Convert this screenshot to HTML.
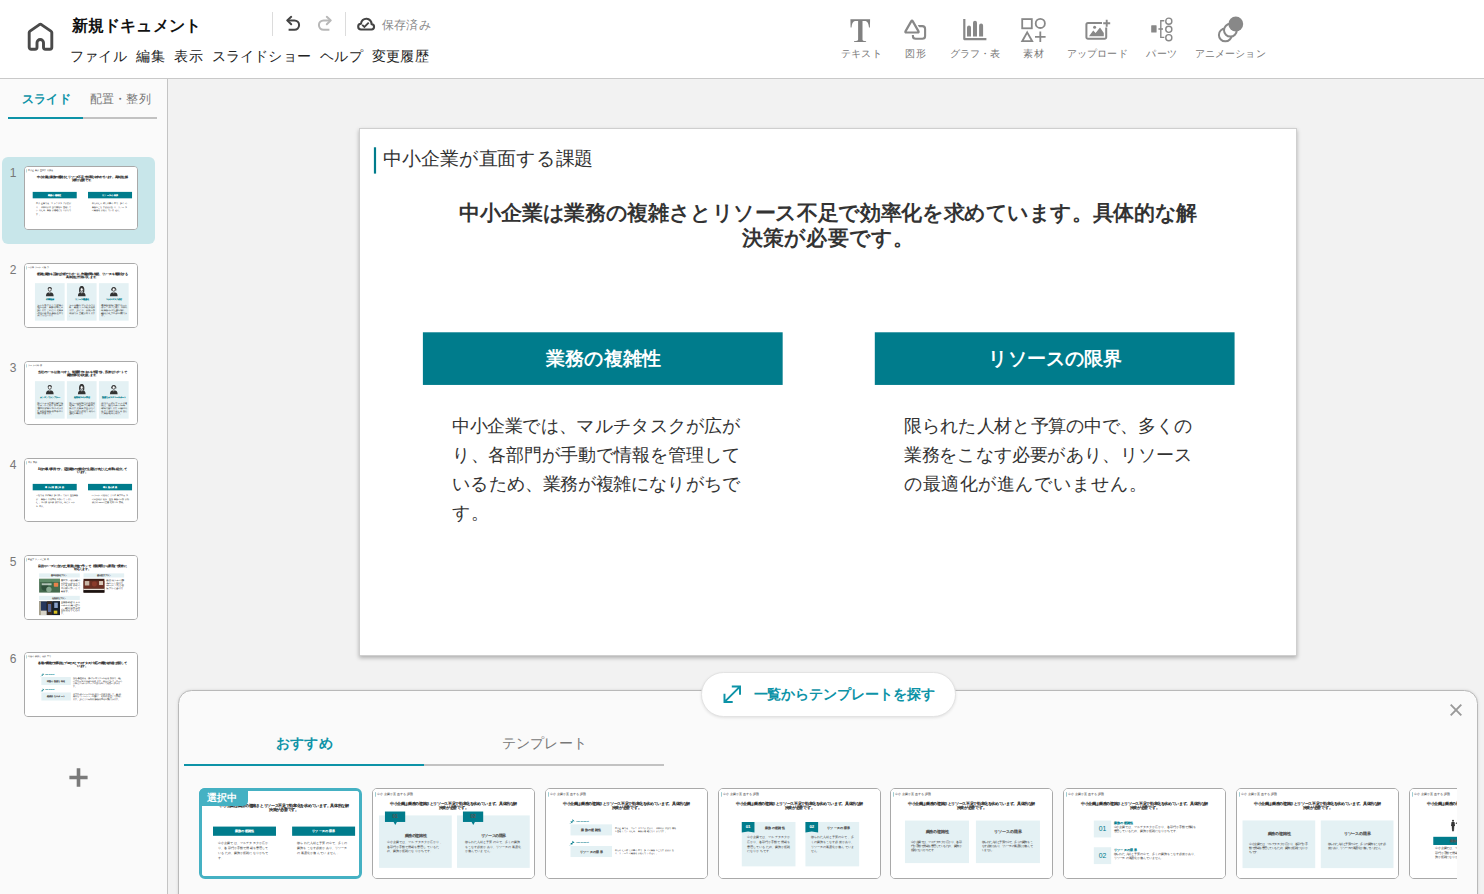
<!DOCTYPE html>
<html lang="ja">
<head>
<meta charset="utf-8">
<title>新規ドキュメント</title>
<style>
*{box-sizing:border-box;margin:0;padding:0}
html,body{width:1484px;height:894px;overflow:hidden}
body{font-family:"Liberation Sans",sans-serif;background:#f2f2f2;position:relative;color:#333;-webkit-font-smoothing:antialiased}
.abs{position:absolute}
svg{position:absolute;overflow:visible}
/* header */
#hd{position:absolute;left:0;top:0;width:1484px;height:79px;background:#fff;border-bottom:1px solid #c9c9c9}
#ttl{position:absolute;left:72px;top:15px;height:22px;line-height:22px;font-size:16px;font-weight:bold;color:#111;white-space:nowrap}
#menu{position:absolute;left:70px;top:46px;height:20px;line-height:20px;font-size:14px;color:#222;white-space:nowrap}
#menu span{display:inline-block;margin-right:10px;vertical-align:top}
.vd{position:absolute;top:12px;width:1px;height:24px;background:#dcdcdc}
#saved{position:absolute;left:382px;top:16px;height:18px;line-height:18px;font-size:12px;color:#8a8a8a;white-space:nowrap}
.tl{position:absolute;top:47px;height:14px;line-height:14px;font-size:10px;color:#777;white-space:nowrap;text-align:center;width:90px;margin-left:-45px}
/* sidebar */
#sb{position:absolute;left:0;top:79px;width:168px;height:815px;background:#fafafa;border-right:1px solid #c4c4c4}
.stab{position:absolute;top:90px;height:18px;line-height:18px;font-size:12px;white-space:nowrap}
.num{position:absolute;left:9px;width:8px;text-align:center;font-size:12px;line-height:14px;color:#777}
.th{position:absolute;left:24px;width:114px;height:64px;border:1px solid #a9a9a9;border-radius:4px;background:#fff;overflow:hidden}
.sl{position:absolute;left:0;top:0;width:1280px;height:720px;background:#fff;transform-origin:0 0;color:#333;overflow:hidden}
.sl div{position:absolute;white-space:nowrap}
.sl .wr{white-space:normal;word-break:break-all;line-break:anywhere;letter-spacing:-.03em}
.j{text-align:justify;text-align-last:justify;letter-spacing:-.05em;white-space:nowrap}
.sl .tb{left:19px;top:25px;width:3px;height:36px;background:#007c8c}
.sl .tt{left:32px;top:23px;height:36px;line-height:36px;font-size:26px}
.sl .hl{left:128px;top:97px;width:1024px;text-align:center;font-size:28.8px;line-height:34.5px;font-weight:bold}
.sl .bx{background:#007c8c;color:#fff;font-weight:bold;font-size:26px;text-align:center}
.sl .bd{font-size:25px;line-height:40px}
.sl .lp{background:#e4f1f4}
.sl .th2{color:#007c8c;font-weight:bold;text-align:center}
/* main slide */
#cv{position:absolute;left:359px;top:128px;width:938px;height:527.6px;border:1px solid #cfcfcf;background:#fff;box-shadow:0 2px 4px rgba(0,0,0,.28);overflow:hidden}
/* bottom panel */
#pn{position:absolute;left:178px;top:690px;width:1300px;height:220px;border:1px solid #b9b9b9;border-radius:13.5px 13.5px 0 0;background:#fafafa;box-shadow:0 0 3px rgba(0,0,0,.12)}
#pill{position:absolute;left:701px;top:671.5px;width:254.5px;height:45px;border-radius:22.5px;background:#fff;border:1px solid #e3e3e3;box-shadow:0 1px 3px rgba(0,0,0,.10)}
#pill span{position:absolute;left:51.5px;top:11.6px;height:20px;line-height:20px;font-size:14px;font-weight:bold;color:#0d93a7;white-space:nowrap}
.ptab{position:absolute;top:732px;width:240px;height:22px;line-height:22px;font-size:14px;text-align:center;white-space:nowrap}
#cards{position:absolute;left:184px;top:780px;width:1273px;height:114px;overflow:hidden}
.cd{position:absolute;top:8px;width:163px;height:91px;border:1px solid #a9a9a9;border-radius:5px;background:#fff;overflow:hidden}
.cd .sl{transform:scale(.1258)}
.th .sl{transform:scale(.0895);-webkit-text-stroke:.5px currentColor}
.cd .sl{-webkit-text-stroke:.25px currentColor}
.th .sl div{color:#5c5c5c}
.cd .sl div{color:#555}
.th .sl div[style*="font-weight:bold"],.cd .sl div[style*="font-weight:bold"]{color:#333}
</style>
</head>
<body>
<div id="hd"><svg style="left:27px;top:23px" width="26" height="28" viewBox="0 0 26 28"><path d="M2.2 9.6 Q2.2 8.7 3 8.1 L12.4 1.6 Q13.4 1 14.4 1.6 L23.9 8.1 Q24.8 8.7 24.8 9.6 V24.3 A2 2 0 0 1 22.8 26.3 H18.5 A2 2 0 0 1 16.5 24.3 V19.75 A3.25 3.25 0 0 0 10 19.75 V24.3 A2 2 0 0 1 8 26.3 H4.2 A2 2 0 0 1 2.2 24.3 Z" fill="none" stroke="#4a4a4a" stroke-width="2.9" stroke-linejoin="round"/></svg><svg style="left:0;top:0" width="1484" height="79" viewBox="0 0 1484 79" fill="none" stroke-linecap="round" stroke-linejoin="round"><g stroke="#444" stroke-width="2"><path d="M291.2 16.8 L287.2 20.4 L291.2 24.2"/><path d="M287.6 20.4 H294.4 A4.7 4.7 0 0 1 294.4 29.8 H288.6" stroke-linecap="butt"/></g><g stroke="#b8b8b8" stroke-width="2"><path d="M326.8 16.8 L330.8 20.4 L326.8 24.2"/><path d="M330.4 20.4 H323.6 A4.7 4.7 0 0 0 323.6 29.8 H329.4" stroke-linecap="butt"/></g><path d="M361.2 29.5 A2.9 2.9 0 0 1 361 23.7 A5.3 5.3 0 0 1 371.6 24.3 A2.6 2.6 0 0 1 371.3 29.5 Z" stroke="#444" stroke-width="2.1"/><path d="M362.2 24.9 L364.4 27 L368.7 22.7" stroke="#444" stroke-width="1.8" stroke-linecap="butt" stroke-linejoin="miter"/></svg><svg style="left:850px;top:19px" width="21" height="24" viewBox="0 0 21 24"><path fill="#808080" d="M0.4 0.3 H20.1 L19.9 8.5 H19.0 C18.6 5 17.8 2.5 15.6 2.1 H12.5 V20.4 C12.5 21.7 13.4 22 16.1 22.2 V23 H4 V22.2 C6.9 22 8.1 21.7 8.1 20.4 V2.1 H4.9 C2.7 2.5 1.9 5 1.5 8.5 H0.6 Z"/></svg><svg style="left:904px;top:19px" width="23" height="22" viewBox="0 0 23 22" fill="none" stroke-linejoin="round"><rect x="8.9" y="7.1" width="12.2" height="12.7" rx="2.8" stroke="#888" stroke-width="2.1"/><path d="M7.2 2.39 Q8 1 8.8 2.39 L14.4 12.11 Q15.2 13.5 13.6 13.5 H2.4 Q0.8 13.5 1.6 12.11 Z" fill="#fff" stroke="#fff" stroke-width="5"/><path d="M7.2 2.39 Q8 1 8.8 2.39 L14.4 12.11 Q15.2 13.5 13.6 13.5 H2.4 Q0.8 13.5 1.6 12.11 Z" fill="#fff" stroke="#888" stroke-width="2.2"/></svg><svg style="left:962.6px;top:19.4px" width="24" height="21" viewBox="0 0 24 21" fill="none"><path d="M1.3 0 V20.1 H23.4" stroke="#888" stroke-width="2.2" stroke-linejoin="round"/><path d="M4 17.5 V8.6 a2 2 0 0 1 4 0 V17.5Z M10 17.5 V3.8 a2 2 0 0 1 4 0 V17.5Z M16.1 17.5 V6.4 a2 2 0 0 1 4 0 V17.5Z" fill="#888"/></svg><svg style="left:1021px;top:17.9px" width="25" height="25" viewBox="0 0 25 25" fill="none" stroke="#888" stroke-width="1.8"><rect x="1.2" y="1.1" width="9.6" height="9.2"/><circle cx="19.3" cy="5.4" r="4.6"/><path d="M6.2 14.4 L11.2 23.2 H1.2 Z" stroke-linejoin="miter"/><path d="M14 18.8 H24.6 M19.3 13.5 V24.1"/></svg><svg style="left:1085px;top:19px" width="26" height="21" viewBox="0 0 26 21" fill="none"><path d="M17 4 H3 A1.6 1.6 0 0 0 1.4 5.6 V18.2 A1.6 1.6 0 0 0 3 19.8 H19.6 A1.6 1.6 0 0 0 21.2 18.2 V8.6" stroke="#888" stroke-width="2"/><path d="M4 17.2 L8.2 11.6 L10.6 14 L15 8.6 L18.8 14 V17.2Z" fill="#888"/><circle cx="9.6" cy="8.2" r="1.5" fill="#888"/><path d="M18.2 4.2 H25.2 M21.7 0.7 V7.7" stroke="#888" stroke-width="1.9"/></svg><svg style="left:1150px;top:17px" width="24" height="25" viewBox="0 0 24 25" fill="none" stroke="#888" stroke-width="1.4"><rect x="1.2" y="8.2" width="5.4" height="7.4" rx=".6" fill="#888" stroke="none"/><path d="M8.4 12 H13 M14.3 3.7 H10.8 V20.4 H14.3"/><circle cx="18.8" cy="4.2" r="3.05"/><circle cx="18.8" cy="12.3" r="3.05"/><circle cx="18.8" cy="20.7" r="3.05"/></svg><svg style="left:1217px;top:16px" width="27" height="27" viewBox="0 0 27 27" fill="none" stroke="#888" stroke-width="2"><circle cx="8.3" cy="18.9" r="6.4" /><circle cx="13.4" cy="14.2" r="6.4" fill="#fff"/><circle cx="18.8" cy="8" r="7.4" fill="#888" stroke="none"/></svg><div id="ttl" class="j" style="width:128px">新規ドキュメント</div><div id="menu"><span class="j" style="width:56px">ファイル</span><span class="j" style="width:28px">編集</span><span class="j" style="width:28px">表示</span><span class="j" style="width:98px">スライドショー</span><span class="j" style="width:42px">ヘルプ</span><span class="j" style="width:56px">変更履歴</span></div><div class="vd" style="left:272px"></div><div class="vd" style="left:345px"></div><div id="saved" class="j" style="width:48px">保存済み</div><div class="tl j" style="left:861px;width:40px;margin-left:-20px">テキスト</div><div class="tl j" style="left:915.4px;width:20px;margin-left:-10px">図形</div><div class="tl j" style="left:974.7px;width:50px;margin-left:-25px">グラフ・表</div><div class="tl j" style="left:1033.3px;width:20px;margin-left:-10px">素材</div><div class="tl j" style="left:1097px;width:60px;margin-left:-30px">アップロード</div><div class="tl j" style="left:1161.3px;width:30px;margin-left:-15px">パーツ</div><div class="tl j" style="left:1230px;width:70px;margin-left:-35px">アニメーション</div></div>
<div id="sb"></div><div class="stab j" style="left:22px;width:48px;font-weight:bold;color:#0d93a7">スライド</div><div class="stab j" style="left:90px;width:60px;color:#777">配置・整列</div><div class="abs" style="left:8px;top:117px;width:149px;height:2px;background:#c2c2c2"></div><div class="abs" style="left:8px;top:117px;width:75px;height:2px;background:#0d93a7"></div><div class="abs" style="left:2px;top:157px;width:153px;height:87px;border-radius:6px;background:#c8e6ea"></div><div class="num" style="top:166px">1</div><div class="th" style="top:166px;height:64px"><div class="sl"><div class="tb"></div><div class="j" style="left:32px;width:286px;top:21.6px;font-size:26px;height:36px;line-height:36px;">中小企業が直面する課題</div><div class="j" style="left:136px;width:1008px;top:97px;font-size:28.8px;height:34.5px;line-height:34.5px;font-weight:bold;">中小企業は業務の複雑さとリソース不足で効率化を求めています。具体的な解</div><div style="left:128px;width:1024px;text-align:center;top:131.5px;font-size:28.8px;height:34.5px;line-height:34.5px;font-weight:bold;">決策が必要です。</div><div class="bx" style="left:86px;top:278px;width:492px;height:72px"></div><div class="bx" style="left:704px;top:278px;width:492px;height:72px"></div><div class="j" style="left:254px;width:156px;top:278px;font-size:26px;height:72px;line-height:72px;color:#fff;font-weight:bold;">業務の複雑性</div><div class="j" style="left:859px;width:182px;top:278px;font-size:26px;height:72px;line-height:72px;color:#fff;font-weight:bold;">リソースの限界</div><div class="j" style="left:126px;width:393.84px;top:387px;font-size:24.615px;height:39.385px;line-height:39.385px;">中小企業では、マルチタスクが広が</div><div class="j" style="left:126px;width:393.84px;top:426.385px;font-size:24.615px;height:39.385px;line-height:39.385px;">り、各部門が手動で情報を管理して</div><div class="j" style="left:126px;width:393.84px;top:465.77px;font-size:24.615px;height:39.385px;line-height:39.385px;">いるため、業務が複雑になりがちで</div><div style="left:126px;top:505.155px;font-size:24.615px;height:39.385px;line-height:39.385px;">す。</div><div class="j" style="left:744px;width:393.84px;top:387px;font-size:24.615px;height:39.385px;line-height:39.385px;">限られた人材と予算の中で、多くの</div><div class="j" style="left:744px;width:393.84px;top:426.385px;font-size:24.615px;height:39.385px;line-height:39.385px;">業務をこなす必要があり、リソース</div><div style="left:744px;top:465.77px;font-size:24.615px;height:39.385px;line-height:39.385px;">の最適化が進んでいません。</div></div></div><div class="num" style="top:263px">2</div><div class="th" style="top:263px;height:65px"><div class="sl"><div class="tb"></div><div style="left:32px;top:21.6px;font-size:26px;height:36px;line-height:36px;">AI分析ツールの魅力</div><div class="j" style="left:136px;width:1008px;top:97px;font-size:28.8px;height:34.5px;line-height:34.5px;font-weight:bold;">複雑な業務を正確な分析でサポートし作業時間を短縮、リソースを最適化する</div><div style="left:128px;width:1024px;text-align:center;top:131.5px;font-size:28.8px;height:34.5px;line-height:34.5px;font-weight:bold;">具体的な方法を示します。</div><div class="lp" style="left:111px;top:214px;width:332px;height:419px"></div><svg style="left:232px;top:245px" width="90" height="116" viewBox="0 0 90 116"><path d="M22 40 C16 4 74 4 68 40 C64 26 26 26 22 40Z" fill="#333"/><ellipse cx="45" cy="40" rx="16" ry="20" fill="#fff" stroke="#333" stroke-width="9"/><path d="M2 114 C2 82 20 72 45 72 C70 72 88 82 88 114Z" fill="#333"/><path d="M38 73 L45 90 L52 73Z" fill="#fff"/><path d="M42 80 h6 l2 24 l-5 6 l-5 -6z" fill="#333"/></svg><div style="left:111px;width:332px;text-align:center;top:383px;font-size:22px;height:34px;line-height:34px;color:#007c8c;font-weight:bold;">作業軽減</div><div class="wr" style="left:130px;top:445px;width:292px;font-size:20px;line-height:29.4px;">ツールを導入することで手作業の負担を軽減し、業務を効率的に自動化します。これにより、従業員の負担が減り本来の業務に集中できるようになります。</div><div class="lp" style="left:468px;top:214px;width:332px;height:419px"></div><svg style="left:589px;top:245px" width="90" height="116" viewBox="0 0 90 116"><path d="M18 74 C8 20 26 2 45 2 C64 2 82 20 72 74 L58 74 C64 44 60 26 45 26 C30 26 26 44 32 74Z" fill="#333"/><ellipse cx="45" cy="40" rx="16" ry="20" fill="#fff" stroke="#333" stroke-width="9"/><path d="M2 114 C2 82 20 72 45 72 C70 72 88 82 88 114Z" fill="#333"/><path d="M38 73 L45 90 L52 73Z" fill="#fff"/><path d="M42 80 h6 l2 24 l-5 6 l-5 -6z" fill="#333"/></svg><div style="left:468px;width:332px;text-align:center;top:383px;font-size:22px;height:34px;line-height:34px;color:#007c8c;font-weight:bold;">リソース最適化</div><div class="wr" style="left:487px;top:445px;width:292px;font-size:20px;line-height:29.4px;">ツールは業務をリアルタイムで分析し、最適なリソース配分を提案します。これにより、余計な工数を削減でき、生産性が向上します。</div><div class="lp" style="left:826px;top:214px;width:332px;height:419px"></div><svg style="left:947px;top:245px" width="90" height="116" viewBox="0 0 90 116"><path d="M21 40 C17 4 73 4 69 40 L63 40 C61 24 29 24 27 40Z" fill="#333"/><path d="M17 32 h9 v20 h-9z M64 32 h9 v20 h-9z" fill="#333"/><ellipse cx="45" cy="40" rx="16" ry="20" fill="#fff" stroke="#333" stroke-width="9"/><path d="M2 114 C2 82 20 72 45 72 C70 72 88 82 88 114Z" fill="#333"/><path d="M38 73 L45 90 L52 73Z" fill="#fff"/><path d="M42 80 h6 l2 24 l-5 6 l-5 -6z" fill="#333"/></svg><div style="left:826px;width:332px;text-align:center;top:383px;font-size:22px;height:34px;line-height:34px;color:#007c8c;font-weight:bold;">マルチタスク対応</div><div class="wr" style="left:845px;top:445px;width:292px;font-size:20px;line-height:29.4px;">複数業務を同時に管理するツールはマルチタスクに対応し、各部門間の業務のムダな重複を削減し、最適化されたプロセスを構築できます。</div></div></div><div class="num" style="top:361px">3</div><div class="th" style="top:361px;height:64px"><div class="sl"><div class="tb"></div><div class="j" style="left:32px;width:156px;top:21.6px;font-size:26px;height:36px;line-height:36px;">ツールの特徴</div><div class="j" style="left:150.4px;width:979.2px;top:97px;font-size:28.8px;height:34.5px;line-height:34.5px;font-weight:bold;">当社のツールは使いやすく、短期間でスキルを学習でき、迅速なサポートで</div><div style="left:128px;width:1024px;text-align:center;top:131.5px;font-size:28.8px;height:34.5px;line-height:34.5px;font-weight:bold;">業務効率化を支援します。</div><div class="lp" style="left:111px;top:214px;width:332px;height:419px"></div><svg style="left:232px;top:245px" width="90" height="116" viewBox="0 0 90 116"><path d="M22 40 C16 4 74 4 68 40 C64 26 26 26 22 40Z" fill="#333"/><ellipse cx="45" cy="40" rx="16" ry="20" fill="#fff" stroke="#333" stroke-width="9"/><path d="M2 114 C2 82 20 72 45 72 C70 72 88 82 88 114Z" fill="#333"/><path d="M38 73 L45 90 L52 73Z" fill="#fff"/><path d="M42 80 h6 l2 24 l-5 6 l-5 -6z" fill="#333"/></svg><div style="left:111px;width:332px;text-align:center;top:383px;font-size:22px;height:34px;line-height:34px;color:#007c8c;font-weight:bold;">カンタンでシンプルUI</div><div class="wr" style="left:130px;top:445px;width:292px;font-size:20px;line-height:29.4px;">当社のツールは直感的な操作で誰でもカンタンに使え、数回の操作で基本的な作業をマスターできます。短期間で業務の効率化を図り成果を実感します。</div><div class="lp" style="left:468px;top:214px;width:332px;height:419px"></div><svg style="left:589px;top:245px" width="90" height="116" viewBox="0 0 90 116"><path d="M18 74 C8 20 26 2 45 2 C64 2 82 20 72 74 L58 74 C64 44 60 26 45 26 C30 26 26 44 32 74Z" fill="#333"/><ellipse cx="45" cy="40" rx="16" ry="20" fill="#fff" stroke="#333" stroke-width="9"/><path d="M2 114 C2 82 20 72 45 72 C70 72 88 82 88 114Z" fill="#333"/><path d="M38 73 L45 90 L52 73Z" fill="#fff"/><path d="M42 80 h6 l2 24 l-5 6 l-5 -6z" fill="#333"/></svg><div style="left:468px;width:332px;text-align:center;top:383px;font-size:22px;height:34px;line-height:34px;color:#007c8c;font-weight:bold;">短期間スキル学習</div><div class="wr" style="left:487px;top:445px;width:292px;font-size:20px;line-height:29.4px;">当社ツールは短期間で必要な技術を習得し、学習カーブも最小限に抑えます。従業員の負担も少なくスムーズな導入が可能で、現場の生産性を高めます。</div><div class="lp" style="left:826px;top:214px;width:332px;height:419px"></div><svg style="left:947px;top:245px" width="90" height="116" viewBox="0 0 90 116"><path d="M21 40 C17 4 73 4 69 40 L63 40 C61 24 29 24 27 40Z" fill="#333"/><path d="M17 32 h9 v20 h-9z M64 32 h9 v20 h-9z" fill="#333"/><ellipse cx="45" cy="40" rx="16" ry="20" fill="#fff" stroke="#333" stroke-width="9"/><path d="M2 114 C2 82 20 72 45 72 C70 72 88 82 88 114Z" fill="#333"/><path d="M38 73 L45 90 L52 73Z" fill="#fff"/><path d="M42 80 h6 l2 24 l-5 6 l-5 -6z" fill="#333"/></svg><div style="left:826px;width:332px;text-align:center;top:383px;font-size:22px;height:34px;line-height:34px;color:#007c8c;font-weight:bold;">迅速なカスタマーサポート</div><div class="wr" style="left:845px;top:445px;width:292px;font-size:20px;line-height:29.4px;">専門スタッフ対応でチャットや電話など、迅速なサポートを24時間体制で提供します。不明点や問題もすぐに解決できるため、安心して業務を進められます。</div></div></div><div class="num" style="top:458px">4</div><div class="th" style="top:458px;height:64px"><div class="sl"><div class="tb"></div><div class="j" style="left:32px;width:104px;top:21.6px;font-size:26px;height:36px;line-height:36px;">導入事例</div><div style="left:128px;width:1024px;text-align:center;top:97px;font-size:28.8px;height:34.5px;line-height:34.5px;font-weight:bold;">A社の導入事例です。定型業務の自動化で生産性が向上した成果を紹介して</div><div style="left:128px;width:1024px;text-align:center;top:131.5px;font-size:28.8px;height:34.5px;line-height:34.5px;font-weight:bold;">います。</div><div class="bx" style="left:86px;top:278px;width:492px;height:72px"></div><div class="bx" style="left:704px;top:278px;width:492px;height:72px"></div><div class="j" style="left:228px;width:208px;top:278px;font-size:26px;height:72px;line-height:72px;color:#fff;font-weight:bold;">導入の背景と目的</div><div class="j" style="left:872px;width:156px;top:278px;font-size:26px;height:72px;line-height:72px;color:#fff;font-weight:bold;">導入後の成果</div><div style="left:126px;top:387px;font-size:24.615px;height:39.385px;line-height:39.385px;">A社では手作業が多く残っており担当業務</div><div style="left:126px;top:426.385px;font-size:24.615px;height:39.385px;line-height:39.385px;">が、業務の非効率化を招いていまし</div><div style="left:126px;top:465.77px;font-size:24.615px;height:39.385px;line-height:39.385px;">た。その課題を解決するためにツール</div><div style="left:126px;top:505.155px;font-size:24.615px;height:39.385px;line-height:39.385px;">を導入。</div><div style="left:744px;top:387px;font-size:24.615px;height:39.385px;line-height:39.385px;">AIツールの活用により作業プロセス</div><div class="j" style="left:744px;width:418.455px;top:426.385px;font-size:24.615px;height:39.385px;line-height:39.385px;">の自動化が進み、担当業務の工数が削</div><div style="left:744px;top:465.77px;font-size:24.615px;height:39.385px;line-height:39.385px;">減され30%の生産性向上を実現。</div></div></div><div class="num" style="top:555px">5</div><div class="th" style="top:555px;height:65px"><div class="sl"><div class="tb"></div><div class="j" style="left:32px;width:234px;top:21.6px;font-size:26px;height:36px;line-height:36px;">料金プランのご案内</div><div class="j" style="left:150.4px;width:979.2px;top:97px;font-size:28.8px;height:34.5px;line-height:34.5px;font-weight:bold;">目的やニーズに合わせた最適な料金プランで、初期費用から運用まで柔軟に</div><div style="left:128px;width:1024px;text-align:center;top:131.5px;font-size:28.8px;height:34.5px;line-height:34.5px;font-weight:bold;">対応します。</div><div class="lp th2" style="left:158px;top:194px;width:454px;height:46px;line-height:46px;font-size:22px">基本自動化プラン</div><svg style="left:158px;top:255px" width="233" height="154" viewBox="0 0 235 155"><rect width="235" height="155" fill="#456b4e"/><rect x="0" y="0" width="235" height="36" fill="#5f8a68"/><circle cx="70" cy="90" r="45" fill="#2f4f3a"/><circle cx="140" cy="70" r="38" fill="#3d6a4a"/><circle cx="110" cy="120" r="30" fill="#88a890"/><rect x="165" y="45" width="50" height="45" rx="8" fill="#e8824a"/><rect x="30" y="50" width="110" height="22" fill="#dfe8e0" opacity=".75"/></svg><div class="wr" style="left:407px;top:258px;width:205px;font-size:19px;line-height:30px;">基本プランは必要最低の自動化ツールをセットでまとめた内容。初めての導入検討のプランとして最適です。</div><div class="lp th2" style="left:654px;top:194px;width:454px;height:46px;line-height:46px;font-size:22px">適用拡大プラン</div><svg style="left:654px;top:255px" width="233" height="154" viewBox="0 0 235 155"><rect width="235" height="155" fill="#3a1f18"/><rect x="0" y="20" width="235" height="90" fill="#6b2f22"/><rect x="15" y="25" width="50" height="50" fill="#c9b8a8"/><rect x="95" y="30" width="55" height="55" rx="20" fill="#8a3a2a"/><rect x="175" y="25" width="45" height="45" fill="#d8c8b8"/><rect x="0" y="112" width="235" height="16" fill="#e8e0d8"/><rect x="0" y="128" width="235" height="27" fill="#1a1210"/></svg><div class="wr" style="left:903px;top:258px;width:205px;font-size:19px;line-height:30px;">適用拡大はツールの連携の幅をもっと広げます。レポーティングなどの拡張もプランに含みます。</div><div class="lp th2" style="left:158px;top:445px;width:454px;height:46px;line-height:46px;font-size:22px">包括的なプラン</div><svg style="left:158px;top:506px" width="233" height="154" viewBox="0 0 235 155"><rect width="235" height="155" fill="#1c2438"/><rect x="0" y="0" width="20" height="155" fill="#b8b098"/><rect x="20" y="10" width="60" height="95" fill="#27365c"/><rect x="20" y="105" width="65" height="50" fill="#d8d4c8"/><rect x="90" y="0" width="55" height="155" fill="#3a2a20"/><rect x="100" y="30" width="35" height="90" fill="#5a6a9a"/><rect x="150" y="0" width="85" height="155" fill="#18202c"/><rect x="170" y="15" width="40" height="60" fill="#8aa0c8"/><rect x="165" y="105" width="40" height="35" fill="#d8c020"/></svg><div class="wr" style="left:407px;top:509px;width:205px;font-size:19px;line-height:30px;">全機能を網羅するフルサーポート付き最上位プラン。継続的な改善と保守全般も任せていただけます。</div></div></div><div class="num" style="top:652px">6</div><div class="th" style="top:652px;height:65px"><div class="sl"><div class="tb"></div><div class="j" style="left:32px;width:260px;top:21.6px;font-size:26px;height:36px;line-height:36px;">問題の解決とは以下で</div><div class="j" style="left:150.4px;width:979.2px;top:97px;font-size:28.8px;height:34.5px;line-height:34.5px;font-weight:bold;">各種の機能で効率的なプロセスとマルチタスク対応の機能を詳細に説明して</div><div style="left:128px;width:1024px;text-align:center;top:131.5px;font-size:28.8px;height:34.5px;line-height:34.5px;font-weight:bold;">います。</div><svg style="left:177px;top:223px" width="40" height="40" viewBox="0 0 40 40"><path d="M22 2 L38 18 L33 20 L27 17 L20 25 L21 32 L17 34 L6 23 L8 19 L15 20 L23 13 L20 7Z" fill="#007c8c"/><path d="M11 29 L2 38" stroke="#007c8c" stroke-width="3" stroke-linecap="round"/></svg><div style="left:226px;top:229px;font-size:19px;line-height:20px;font-weight:bold;color:#007c8c">Our benefit</div><div class="lp th2" style="left:183px;top:268px;width:329px;height:90px;line-height:90px;font-size:26px">問題の迅速な特定</div><div class="wr" style="left:535px;top:268.9px;width:548px;font-size:21px;line-height:29.4px;">当社の新技術は、独自アルゴリズムを使用し数秒で、現在のプロセスの問題点を特定します。現在のワークフローの分析によりボトルネックを見つけ出して改善へと導きます。</div><svg style="left:177px;top:396px" width="40" height="40" viewBox="0 0 40 40"><path d="M22 2 L38 18 L33 20 L27 17 L20 25 L21 32 L17 34 L6 23 L8 19 L15 20 L23 13 L20 7Z" fill="#007c8c"/><path d="M11 29 L2 38" stroke="#007c8c" stroke-width="3" stroke-linecap="round"/></svg><div style="left:226px;top:402px;font-size:19px;line-height:20px;font-weight:bold;color:#007c8c">Our benefit</div><div class="lp th2" style="left:183px;top:441px;width:329px;height:90px;line-height:90px;font-size:26px">継続的なサポート</div><div class="wr" style="left:535px;top:441.9px;width:548px;font-size:21px;line-height:29.4px;">各プロセスのデータを統合的なAI手法で分析して、最も効果的なソリューションを提案し、定期的な見直しで実現します。これにより長期的な業務効率化を実現できます。</div></div></div><svg style="left:69px;top:768px" width="19" height="19" viewBox="0 0 19 19"><path d="M9.5 0.2 V18.8 M0.4 9.5 H18.6" stroke="#7a7a7a" stroke-width="3.6"/></svg>
<div id="cv"><div class="sl" style="transform:scale(.73125)"><div class="tb"></div><div class="j" style="left:32px;width:286px;top:21.6px;font-size:26px;height:36px;line-height:36px;">中小企業が直面する課題</div><div class="j" style="left:136px;width:1008px;top:97px;font-size:28.8px;height:34.5px;line-height:34.5px;font-weight:bold;">中小企業は業務の複雑さとリソース不足で効率化を求めています。具体的な解</div><div style="left:128px;width:1024px;text-align:center;top:131.5px;font-size:28.8px;height:34.5px;line-height:34.5px;font-weight:bold;">決策が必要です。</div><div class="bx" style="left:86px;top:278px;width:492px;height:72px"></div><div class="bx" style="left:704px;top:278px;width:492px;height:72px"></div><div class="j" style="left:254px;width:156px;top:278px;font-size:26px;height:72px;line-height:72px;color:#fff;font-weight:bold;">業務の複雑性</div><div class="j" style="left:859px;width:182px;top:278px;font-size:26px;height:72px;line-height:72px;color:#fff;font-weight:bold;">リソースの限界</div><div class="j" style="left:126px;width:393.84px;top:387px;font-size:24.615px;height:39.385px;line-height:39.385px;">中小企業では、マルチタスクが広が</div><div class="j" style="left:126px;width:393.84px;top:426.385px;font-size:24.615px;height:39.385px;line-height:39.385px;">り、各部門が手動で情報を管理して</div><div class="j" style="left:126px;width:393.84px;top:465.77px;font-size:24.615px;height:39.385px;line-height:39.385px;">いるため、業務が複雑になりがちで</div><div style="left:126px;top:505.155px;font-size:24.615px;height:39.385px;line-height:39.385px;">す。</div><div class="j" style="left:744px;width:393.84px;top:387px;font-size:24.615px;height:39.385px;line-height:39.385px;">限られた人材と予算の中で、多くの</div><div class="j" style="left:744px;width:393.84px;top:426.385px;font-size:24.615px;height:39.385px;line-height:39.385px;">業務をこなす必要があり、リソース</div><div style="left:744px;top:465.77px;font-size:24.615px;height:39.385px;line-height:39.385px;">の最適化が進んでいません。</div></div></div>
<div id="pn"></div><div id="pill"><svg style="left:21.4px;top:12px" width="18.5" height="18.5" viewBox="0 0 20 20" fill="none" stroke="#0d93a7" stroke-width="2.1"><path d="M2 18 L18 2 M9.5 1.6 H18.4 V10.5 M1.6 9.5 V18.4 H10.5"/></svg><span class="j" style="width:181px">一覧からテンプレートを探す</span></div><svg style="left:1450px;top:704px" width="12" height="12" viewBox="0 0 12 12"><path d="M0.7 0.7 L11.3 11.3 M11.3 0.7 L0.7 11.3" stroke="#999" stroke-width="1.9"/></svg><div class="ptab j" style="left:276px;width:56px;font-weight:bold;color:#0d93a7">おすすめ</div><div class="ptab j" style="left:502px;width:84px;color:#777">テンプレート</div><div class="abs" style="left:184px;top:764px;width:480px;height:2px;background:#c2c2c2"></div><div class="abs" style="left:184px;top:764px;width:240px;height:2px;background:#0d93a7"></div><div id="cards"><div class="cd" style="left:15.0px;border:3px solid #45b1c3;border-radius:6px"><div class="sl" style="left:0;top:0;transform:scale(.128)"><div class="j" style="left:136px;width:1008px;top:97px;font-size:28.8px;height:34.5px;line-height:34.5px;font-weight:bold;">中小企業は業務の複雑さとリソース不足で効率化を求めています。具体的な解</div><div style="left:128px;width:1024px;text-align:center;top:131.5px;font-size:28.8px;height:34.5px;line-height:34.5px;font-weight:bold;">決策が必要です。</div><div class="bx" style="left:86px;top:278px;width:492px;height:72px"></div><div class="bx" style="left:704px;top:278px;width:492px;height:72px"></div><div class="j" style="left:254px;width:156px;top:278px;font-size:26px;height:72px;line-height:72px;color:#fff;font-weight:bold;">業務の複雑性</div><div class="j" style="left:859px;width:182px;top:278px;font-size:26px;height:72px;line-height:72px;color:#fff;font-weight:bold;">リソースの限界</div><div class="j" style="left:126px;width:393.84px;top:387px;font-size:24.615px;height:39.385px;line-height:39.385px;">中小企業では、マルチタスクが広が</div><div class="j" style="left:126px;width:393.84px;top:426.385px;font-size:24.615px;height:39.385px;line-height:39.385px;">り、各部門が手動で情報を管理して</div><div class="j" style="left:126px;width:393.84px;top:465.77px;font-size:24.615px;height:39.385px;line-height:39.385px;">いるため、業務が複雑になりがちで</div><div style="left:126px;top:505.155px;font-size:24.615px;height:39.385px;line-height:39.385px;">す。</div><div class="j" style="left:744px;width:393.84px;top:387px;font-size:24.615px;height:39.385px;line-height:39.385px;">限られた人材と予算の中で、多くの</div><div class="j" style="left:744px;width:393.84px;top:426.385px;font-size:24.615px;height:39.385px;line-height:39.385px;">業務をこなす必要があり、リソース</div><div style="left:744px;top:465.77px;font-size:24.615px;height:39.385px;line-height:39.385px;">の最適化が進んでいません。</div></div></div><div class="abs" style="left:15.0px;top:8px;width:49px;height:18px;background:#45b1c3;border-radius:6px 0 5px 0;color:#fff;font-weight:bold;font-size:9.6px;line-height:19px;text-align:center;padding-right:3px;white-space:nowrap;letter-spacing:-.02em">選択中</div><div class="cd" style="left:187.9px"><div class="sl"><div class="tb"></div><div class="j" style="left:32px;width:286px;top:21.6px;font-size:26px;height:36px;line-height:36px;">中小企業が直面する課題</div><div class="j" style="left:136px;width:1008px;top:97px;font-size:28.8px;height:34.5px;line-height:34.5px;font-weight:bold;">中小企業は業務の複雑さとリソース不足で効率化を求めています。具体的な解</div><div style="left:128px;width:1024px;text-align:center;top:131.5px;font-size:28.8px;height:34.5px;line-height:34.5px;font-weight:bold;">決策が必要です。</div><div class="lp" style="left:48px;top:210px;width:578px;height:417px"></div><div class="bx" style="left:95px;top:179px;width:161px;height:83px;line-height:80px;font-size:40px">01</div><svg style="left:163px;top:261px" width="28" height="28" viewBox="0 0 28 28"><path d="M0 0 H28 L14 26Z" fill="#007c8c"/></svg><div class="th2" style="left:48px;top:355px;width:578px;font-size:28px;line-height:38px">業務の複雑性</div><div style="left:110px;top:404px;font-size:24px;height:36px;line-height:36px;">中小企業では、マルチタスクが広がり、</div><div style="left:110px;top:440px;font-size:24px;height:36px;line-height:36px;">各部門が手動で情報を管理しているた</div><div style="left:110px;top:476px;font-size:24px;height:36px;line-height:36px;">め、業務が複雑になりがちです。</div><div class="lp" style="left:668px;top:210px;width:578px;height:417px"></div><div class="bx" style="left:715px;top:179px;width:161px;height:83px;line-height:80px;font-size:40px">02</div><svg style="left:783px;top:261px" width="28" height="28" viewBox="0 0 28 28"><path d="M0 0 H28 L14 26Z" fill="#007c8c"/></svg><div class="th2" style="left:668px;top:355px;width:578px;font-size:28px;line-height:38px">リソースの限界</div><div style="left:730px;top:404px;font-size:24px;height:36px;line-height:36px;">限られた人材と予算の中で、多くの業務</div><div style="left:730px;top:440px;font-size:24px;height:36px;line-height:36px;">をこなす必要があり、リソースの最適化</div><div style="left:730px;top:476px;font-size:24px;height:36px;line-height:36px;">が進んでいません。</div></div></div><div class="cd" style="left:360.7px"><div class="sl"><div class="tb"></div><div class="j" style="left:32px;width:286px;top:21.6px;font-size:26px;height:36px;line-height:36px;">中小企業が直面する課題</div><div class="j" style="left:136px;width:1008px;top:97px;font-size:28.8px;height:34.5px;line-height:34.5px;font-weight:bold;">中小企業は業務の複雑さとリソース不足で効率化を求めています。具体的な解</div><div style="left:128px;width:1024px;text-align:center;top:131.5px;font-size:28.8px;height:34.5px;line-height:34.5px;font-weight:bold;">決策が必要です。</div><svg style="left:189px;top:238px" width="40" height="40" viewBox="0 0 40 40"><path d="M22 2 L38 18 L33 20 L27 17 L20 25 L21 32 L17 34 L6 23 L8 19 L15 20 L23 13 L20 7Z" fill="#007c8c"/><path d="M11 29 L2 38" stroke="#007c8c" stroke-width="3" stroke-linecap="round"/></svg><div style="left:238px;top:244px;font-size:19px;line-height:20px;font-weight:bold;color:#007c8c">Our benefit</div><div class="lp th2" style="left:195px;top:281px;width:330px;height:88px;line-height:88px;font-size:26px">業務の複雑性</div><div style="left:548px;top:301px;font-size:18px;height:24px;line-height:24px;">中小企業では、マルチタスクが広がり、各部門が手動で情報</div><div style="left:548px;top:325px;font-size:18px;height:24px;line-height:24px;">を管理しているため、業務が複雑になりがちです。</div><svg style="left:189px;top:410px" width="40" height="40" viewBox="0 0 40 40"><path d="M22 2 L38 18 L33 20 L27 17 L20 25 L21 32 L17 34 L6 23 L8 19 L15 20 L23 13 L20 7Z" fill="#007c8c"/><path d="M11 29 L2 38" stroke="#007c8c" stroke-width="3" stroke-linecap="round"/></svg><div style="left:238px;top:416px;font-size:19px;line-height:20px;font-weight:bold;color:#007c8c">Our benefit</div><div class="lp th2" style="left:195px;top:453px;width:330px;height:88px;line-height:88px;font-size:26px">リソースの限界</div><div style="left:548px;top:473px;font-size:18px;height:24px;line-height:24px;">限られた人材と予算の中で、多くの業務をこなす必要があ</div><div style="left:548px;top:497px;font-size:18px;height:24px;line-height:24px;">り、リソースの最適化が進んでいません。</div></div></div><div class="cd" style="left:533.6px"><div class="sl"><div class="tb"></div><div class="j" style="left:32px;width:286px;top:21.6px;font-size:26px;height:36px;line-height:36px;">中小企業が直面する課題</div><div class="j" style="left:136px;width:1008px;top:97px;font-size:28.8px;height:34.5px;line-height:34.5px;font-weight:bold;">中小企業は業務の複雑さとリソース不足で効率化を求めています。具体的な解</div><div style="left:128px;width:1024px;text-align:center;top:131.5px;font-size:28.8px;height:34.5px;line-height:34.5px;font-weight:bold;">決策が必要です。</div><div class="lp" style="left:181px;top:262px;width:427px;height:353px"></div><svg style="left:181px;top:262px" width="101" height="86" viewBox="0 0 101 86"><path d="M0 0 H101 V84 L50 76 L0 84Z" fill="#007c8c"/></svg><div style="left:181px;top:282px;width:101px;text-align:center;color:#fff;font-weight:bold;font-size:34px;line-height:38px">01</div><div class="th2" style="left:282px;top:291px;width:326px;font-size:26px;line-height:38px">業務の複雑性</div><div style="left:222px;top:365px;font-size:24px;height:37px;line-height:37px;">中小企業では、マルチタスクが</div><div style="left:222px;top:402px;font-size:24px;height:37px;line-height:37px;">広がり、各部門が手動で情報を</div><div style="left:222px;top:439px;font-size:24px;height:37px;line-height:37px;">管理しているため、業務が複雑</div><div style="left:222px;top:476px;font-size:24px;height:37px;line-height:37px;">になりがちです。</div><div class="lp" style="left:687px;top:262px;width:427px;height:353px"></div><svg style="left:687px;top:262px" width="101" height="86" viewBox="0 0 101 86"><path d="M0 0 H101 V84 L50 76 L0 84Z" fill="#007c8c"/></svg><div style="left:687px;top:282px;width:101px;text-align:center;color:#fff;font-weight:bold;font-size:34px;line-height:38px">02</div><div class="th2" style="left:788px;top:291px;width:326px;font-size:26px;line-height:38px">リソースの限界</div><div style="left:728px;top:365px;font-size:24px;height:37px;line-height:37px;">限られた人材と予算の中で、多</div><div style="left:728px;top:402px;font-size:24px;height:37px;line-height:37px;">くの業務をこなす必要があり、</div><div style="left:728px;top:439px;font-size:24px;height:37px;line-height:37px;">リソースの最適化が進んでいま</div><div style="left:728px;top:476px;font-size:24px;height:37px;line-height:37px;">せん。</div></div></div><div class="cd" style="left:706.4px"><div class="sl"><div class="tb"></div><div class="j" style="left:32px;width:286px;top:21.6px;font-size:26px;height:36px;line-height:36px;">中小企業が直面する課題</div><div class="j" style="left:136px;width:1008px;top:97px;font-size:28.8px;height:34.5px;line-height:34.5px;font-weight:bold;">中小企業は業務の複雑さとリソース不足で効率化を求めています。具体的な解</div><div style="left:128px;width:1024px;text-align:center;top:131.5px;font-size:28.8px;height:34.5px;line-height:34.5px;font-weight:bold;">決策が必要です。</div><div class="lp" style="left:111px;top:251px;width:509px;height:338px"></div><div class="th2" style="left:111px;top:321px;width:509px;font-size:30px;line-height:40px">業務の複雑性</div><div style="left:157px;top:408px;font-size:20px;height:31.5px;line-height:31.5px;">中小企業では、マルチタスクが広がり、各部</div><div style="left:157px;top:439.5px;font-size:20px;height:31.5px;line-height:31.5px;">門が手動で情報を管理しているため、業務が</div><div style="left:157px;top:471px;font-size:20px;height:31.5px;line-height:31.5px;">複雑になりがちです。</div><div class="lp" style="left:675px;top:251px;width:509px;height:338px"></div><div class="th2" style="left:675px;top:321px;width:509px;font-size:30px;line-height:40px">リソースの限界</div><div style="left:721px;top:408px;font-size:20px;height:31.5px;line-height:31.5px;">限られた人材と予算の中で、多くの業務をこ</div><div style="left:721px;top:439.5px;font-size:20px;height:31.5px;line-height:31.5px;">なす必要があり、リソースの最適化が進んで</div><div style="left:721px;top:471px;font-size:20px;height:31.5px;line-height:31.5px;">いません。</div></div></div><div class="cd" style="left:879.3px"><div class="sl"><div class="tb"></div><div class="j" style="left:32px;width:286px;top:21.6px;font-size:26px;height:36px;line-height:36px;">中小企業が直面する課題</div><div class="j" style="left:136px;width:1008px;top:97px;font-size:28.8px;height:34.5px;line-height:34.5px;font-weight:bold;">中小企業は業務の複雑さとリソース不足で効率化を求めています。具体的な解</div><div style="left:128px;width:1024px;text-align:center;top:131.5px;font-size:28.8px;height:34.5px;line-height:34.5px;font-weight:bold;">決策が必要です。</div><div class="lp" style="left:237px;top:251px;width:138px;height:134px;line-height:134px;text-align:center;color:#007c8c;font-size:54px">01</div><div style="left:394px;top:255px;font-size:26px;line-height:34px;font-weight:bold;color:#007c8c">業務の複雑性</div><div style="left:394px;top:289px;font-size:23.2px;height:32px;line-height:32px;">中小企業では、マルチタスクが広がり、各部門が手動で情報を</div><div style="left:394px;top:321px;font-size:23.2px;height:32px;line-height:32px;">管理しているため、業務が複雑になりがちです。</div><div class="lp" style="left:237px;top:463px;width:138px;height:134px;line-height:134px;text-align:center;color:#007c8c;font-size:54px">02</div><div style="left:394px;top:467px;font-size:26px;line-height:34px;font-weight:bold;color:#007c8c">リソースの限界</div><div style="left:394px;top:501px;font-size:23.2px;height:32px;line-height:32px;">限られた人材と予算の中で、多くの業務をこなす必要があり、</div><div style="left:394px;top:533px;font-size:23.2px;height:32px;line-height:32px;">リソースの最適化が進んでいません。</div></div></div><div class="cd" style="left:1052.2px"><div class="sl"><div class="tb"></div><div class="j" style="left:32px;width:286px;top:21.6px;font-size:26px;height:36px;line-height:36px;">中小企業が直面する課題</div><div class="j" style="left:136px;width:1008px;top:97px;font-size:28.8px;height:34.5px;line-height:34.5px;font-weight:bold;">中小企業は業務の複雑さとリソース不足で効率化を求めています。具体的な解</div><div style="left:128px;width:1024px;text-align:center;top:131.5px;font-size:28.8px;height:34.5px;line-height:34.5px;font-weight:bold;">決策が必要です。</div><div class="lp" style="left:44px;top:250px;width:578px;height:379px"></div><div class="th2" style="left:44px;top:337px;width:578px;font-size:30px;line-height:40px">業務の複雑性</div><div style="left:98px;top:424px;font-size:20px;height:31px;line-height:31px;">中小企業では、マルチタスクが広がり、各部門が手</div><div style="left:98px;top:455px;font-size:20px;height:31px;line-height:31px;">動で情報を管理しているため、業務が複雑になりが</div><div style="left:98px;top:486px;font-size:20px;height:31px;line-height:31px;">ちです。</div><div class="lp" style="left:666px;top:250px;width:578px;height:379px"></div><div class="th2" style="left:666px;top:337px;width:578px;font-size:30px;line-height:40px">リソースの限界</div><div style="left:720px;top:424px;font-size:20px;height:31px;line-height:31px;">限られた人材と予算の中で、多くの業務をこなす必</div><div style="left:720px;top:455px;font-size:20px;height:31px;line-height:31px;">要があり、リソースの最適化が進んでいません。</div></div></div><div class="cd" style="left:1225.0px"><div class="sl"><div class="tb"></div><div class="j" style="left:32px;width:286px;top:21.6px;font-size:26px;height:36px;line-height:36px;">中小企業が直面する課題</div><div class="j" style="left:136px;width:1008px;top:97px;font-size:28.8px;height:34.5px;line-height:34.5px;font-weight:bold;">中小企業は業務の複雑さとリソース不足で効率化を求めています。具体的な解</div><div style="left:128px;width:1024px;text-align:center;top:131.5px;font-size:28.8px;height:34.5px;line-height:34.5px;font-weight:bold;">決策が必要です。</div><svg style="left:322px;top:243px" width="70" height="94" viewBox="0 0 70 94"><circle cx="20" cy="9" r="8" fill="#333"/><path d="M8 20 H32 L36 52 H30 L28 92 H21 L20 58 L19 92 H12 L10 52 H4Z" fill="#333"/><path d="M40 30 L62 14 L66 20 L46 36Z" fill="#333"/></svg><div class="bx" style="left:185px;top:380px;width:420px;height:65px;line-height:65px">業務の複雑性</div><div style="left:201px;top:455px;font-size:22px;height:35px;line-height:35px;">中小企業では、マルチタスクが広が</div><div style="left:201px;top:490px;font-size:22px;height:35px;line-height:35px;">部門が手動で情報を管理しているた</div><div style="left:201px;top:525px;font-size:22px;height:35px;line-height:35px;">務が複雑になりがちです。</div></div></div></div>
</body>
</html>
